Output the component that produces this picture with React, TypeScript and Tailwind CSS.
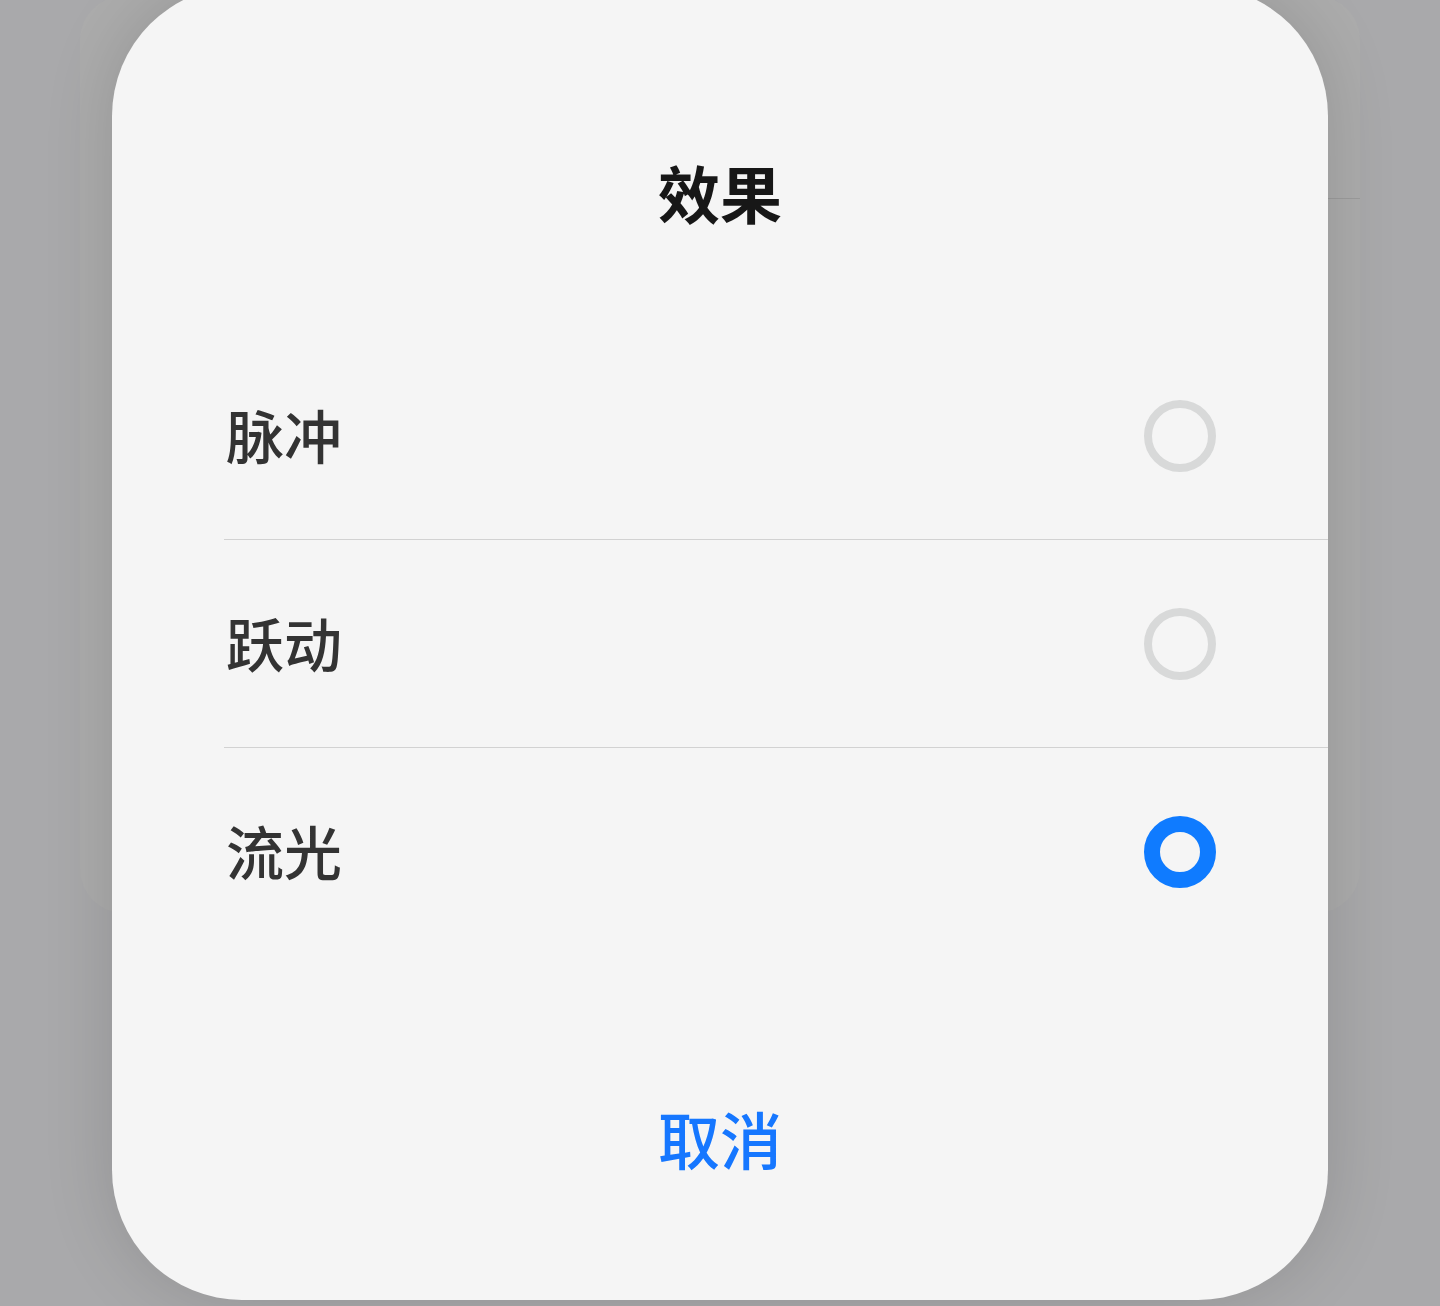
type Option = { label: string; selected: boolean };

const options: Option[] = [
  { label: "脉冲", selected: false },
  { label: "跃动", selected: false },
  { label: "流光", selected: true },
];

function Radio({ selected }: { selected: boolean }) {
  if (selected) {
    return <span className="block h-[72px] w-[72px] rounded-full border-[16px] border-[#0f7bff]" />;
  }
  return <span className="block h-[72px] w-[72px] rounded-full border-[8px] border-[#d8d9d9]" />;
}

export default function App() {
  return (
    <div
      className="relative h-[1306px] w-full overflow-hidden bg-[#a9a9ab]"
      style={{ fontFamily: '"Noto Sans CJK SC", "Noto Sans", sans-serif' }}
    >
      {/* page behind the sheet */}
      <div className="mx-[80px] -mt-[4px] h-[917px] rounded-[44px] bg-[#acacac]">
        <div className="ml-[200px] h-[203px] border-b border-[#9c9c9c]" />
      </div>

      {/* effect picker sheet */}
      <div className="absolute left-[112px] right-[112px] -top-[14px] bottom-[6px] flex flex-col rounded-[130px] bg-[#f5f5f5] shadow-[0_0_70px_rgba(0,0,0,0.14)]">
        <div className="h-[346px] pt-[175px] text-center text-[62px] font-bold leading-[62px] text-[#171717]">
          效果
        </div>

        <div className="flex flex-col">
          {options.map((opt, i) => (
            <div
              key={opt.label}
              className={
                i < options.length - 1
                  ? "ml-[112px] flex h-[208px] items-center justify-between border-b border-[#d2d2d2] pr-[112px]"
                  : "ml-[112px] flex h-[208px] items-center justify-between pr-[112px]"
              }
            >
              <span className="pb-[4px] pl-[2px] text-[58px] font-medium leading-[58px] text-[#333333]">
                {opt.label}
              </span>
              <Radio selected={opt.selected} />
            </div>
          ))}
        </div>

        <button
          type="button"
          className="mt-[151px] self-center text-[62px] font-medium leading-[62px] text-[#1677ff]"
        >
          取消
        </button>
      </div>
    </div>
  );
}
